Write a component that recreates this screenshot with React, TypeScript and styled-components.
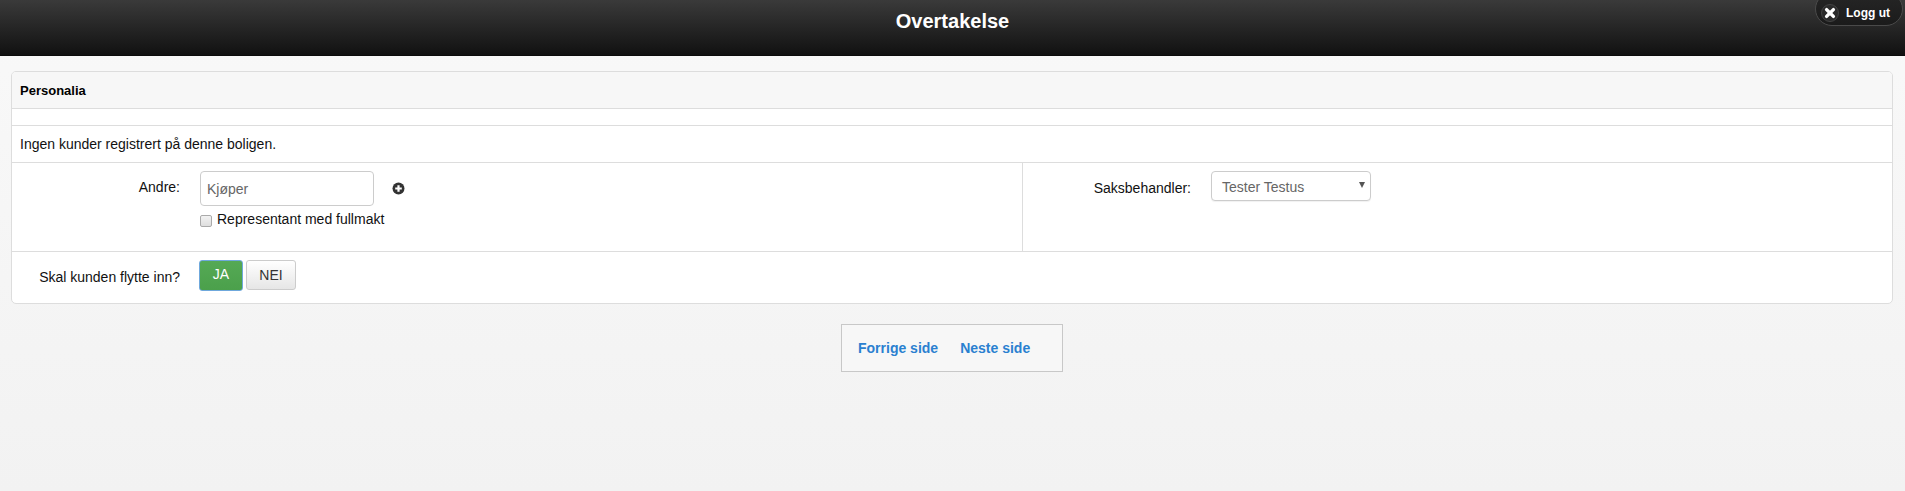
import React from "react";
import styled, { createGlobalStyle } from "styled-components";

const Global = createGlobalStyle`
  html, body { margin: 0; padding: 0; }
  body {
    min-height: 491px;
    background: linear-gradient(#f9f9f9, #f2f2f2);
    font-family: "Liberation Sans", Arial, sans-serif;
    font-size: 14px;
    color: #111;
    overflow: hidden;
  }
`;

const Page = styled.div`
  display: flex;
  flex-direction: column;
  height: 491px;
`;

const Header = styled.header`
  position: relative;
  height: 55px;
  border-bottom: 1px solid #0c0c0c;
  background: linear-gradient(#3a3a3a, #111111);
  color: #fff;
  text-align: center;
  font-size: 20px;
  font-weight: 700;
  line-height: 42px;
`;

const LogoutPill = styled.a`
  position: absolute;
  top: -8px;
  right: 2px;
  width: 88px;
  height: 34px;
  box-sizing: border-box;
  border: 1px solid #4a4a4a;
  border-radius: 17px;
  background: linear-gradient(#262626, #1b1b1b);
  display: flex;
  align-items: center;
  padding: 8px 0 0 5px;
  gap: 7px;
  font-size: 12px;
  font-weight: 700;
  line-height: 1;
  color: #fff;
`;

const LogoutIcon = styled.svg`
  width: 18px;
  height: 18px;
  flex: none;
`;

const Main = styled.main`
  padding: 15px 12px 0 11px;
`;

const Panel = styled.section`
  background: #fff;
  border: 1px solid #dddddd;
  border-radius: 5px;
  overflow: hidden;
`;

const PanelTitle = styled.h2`
  margin: 0;
  height: 36px;
  padding: 0 8px;
  background: #f7f7f7;
  border-bottom: 1px solid #dddddd;
  font-size: 13px;
  font-weight: 700;
  line-height: 37px;
  color: #000;
`;

const SpacerRow = styled.div`
  height: 16px;
  border-bottom: 1px solid #dddddd;
`;

const NoticeRow = styled.div`
  height: 36px;
  padding: 0 8px;
  border-bottom: 1px solid #dddddd;
  line-height: 36px;
  font-size: 14px;
  color: #111;
`;

const FieldsRow = styled.div`
  display: grid;
  grid-template-columns: 1010px 1fr;
  height: 88px;
  border-bottom: 1px solid #dddddd;
`;

const FieldCell = styled.div<{ $divider?: boolean }>`
  display: flex;
  padding-top: 8px;
  border-left: ${(p) => (p.$divider ? "1px solid #dddddd" : "none")};
`;

const Label = styled.label<{ $width: number }>`
  flex: none;
  width: ${(p) => p.$width}px;
  padding-right: 20px;
  box-sizing: border-box;
  text-align: right;
  font-size: 14px;
  color: #111;
`;

const AndreLabel = styled(Label)`
  line-height: 33px;
`;

const SelectLabel = styled(Label)`
  line-height: 35px;
  padding-right: 20px;
`;

const Stack = styled.div`
  display: flex;
  flex-direction: column;
`;

const InputRow = styled.div`
  display: flex;
  align-items: center;
  gap: 18px;
`;

const TextInput = styled.input`
  width: 174px;
  height: 35px;
  box-sizing: border-box;
  padding: 0 6px;
  border: 1px solid #cccccc;
  border-radius: 4px;
  font: 14px "Liberation Sans", Arial, sans-serif;
  color: #555;
  background: #fff;
  &::placeholder { color: #666; opacity: 1; }
`;

const PlusIcon = styled.svg`
  width: 13px;
  height: 13px;
  margin-top: -1px;
`;

const CheckRow = styled.div`
  display: flex;
  gap: 5px;
  margin-top: 5px;
  font-size: 14px;
  line-height: 16px;
  color: #111;
`;

const FakeCheck = styled.span`
  width: 12px;
  height: 12px;
  box-sizing: border-box;
  margin-top: 4px;
  border: 1px solid #aaa;
  border-radius: 2px;
  background: linear-gradient(#f2f2f2, #dedede);
`;

const SelectBox = styled.div`
  position: relative;
  width: 160px;
  height: 30px;
  box-sizing: border-box;
  padding-left: 10px;
  border: 1px solid #cccccc;
  border-radius: 4px;
  background: #fff;
  box-shadow: 0 1px 1px rgba(0, 0, 0, 0.06);
  font-size: 14px;
  line-height: 30px;
  color: #666;
`;

const Arrow = styled.span`
  position: absolute;
  top: 10px;
  right: 5px;
  width: 0;
  height: 0;
  border-left: 3px solid transparent;
  border-right: 3px solid transparent;
  border-top: 6px solid #555;
`;

const MoveRow = styled.div`
  display: flex;
  align-items: flex-start;
  height: 51px;
  padding-top: 8px;
  box-sizing: border-box;
`;

const MoveLabel = styled(Label)`
  line-height: 30px;
  padding-top: 2px;
`;

const Toggle = styled.div`
  display: flex;
  gap: 3px;
`;

const YesButton = styled.button`
  width: 44px;
  height: 31px;
  box-sizing: border-box;
  margin-left: -1px;
  border: 1px solid #6fa8dc;
  border-radius: 3px;
  background: linear-gradient(#55a955, #4ba04b);
  color: #fff;
  font: 14px "Liberation Sans", Arial, sans-serif;
  padding: 0 0 3px;
`;

const NoButton = styled.button`
  width: 50px;
  height: 30px;
  box-sizing: border-box;
  border: 1px solid #cccccc;
  border-radius: 3px;
  background: linear-gradient(#ffffff, #e6e6e6);
  color: #333;
  font: 14px "Liberation Sans", Arial, sans-serif;
  padding: 0 0 1px;
`;

const Pager = styled.nav`
  align-self: center;
  display: flex;
  gap: 22px;
  width: 222px;
  height: 48px;
  box-sizing: border-box;
  margin: 20px 0 0 -1px;
  padding: 0 16px;
  border: 1px solid #c8c8c8;
  background: #f7f7f7;
  font-size: 14px;
  font-weight: 700;
  line-height: 46px;
`;

const PagerLink = styled.a`
  color: #2a80d0;
`;

export default function App() {
  return (
    <Page>
      <Global />
      <Header>
        Overtakelse
        <LogoutPill>
          <LogoutIcon viewBox="0 0 18 18">
            <circle cx="9" cy="9" r="8.5" fill="#2a2a2a" stroke="#444" />
            <path d="M5.6 5.6 12.4 12.4M12.4 5.6 5.6 12.4" stroke="#fff" strokeWidth="3.4" strokeLinecap="round" />
          </LogoutIcon>
          Logg ut
        </LogoutPill>
      </Header>
      <Main>
        <Panel>
          <PanelTitle>Personalia</PanelTitle>
          <SpacerRow />
          <NoticeRow>Ingen kunder registrert på denne boligen.</NoticeRow>
          <FieldsRow>
            <FieldCell>
              <AndreLabel $width={188}>Andre:</AndreLabel>
              <Stack>
                <InputRow>
                  <TextInput placeholder="Kjøper" />
                  <PlusIcon viewBox="0 0 13 13">
                    <circle cx="6.5" cy="6.5" r="6" fill="#333" />
                    <path d="M6.5 3.2v6.6M3.2 6.5h6.6" stroke="#fff" strokeWidth="2.2" />
                  </PlusIcon>
                </InputRow>
                <CheckRow>
                  <FakeCheck />
                  Representant med fullmakt
                </CheckRow>
              </Stack>
            </FieldCell>
            <FieldCell $divider>
              <SelectLabel $width={188}>Saksbehandler:</SelectLabel>
              <SelectBox>
                Tester Testus
                <Arrow />
              </SelectBox>
            </FieldCell>
          </FieldsRow>
          <MoveRow>
            <MoveLabel $width={188}>Skal kunden flytte inn?</MoveLabel>
            <Toggle>
              <YesButton>JA</YesButton>
              <NoButton>NEI</NoButton>
            </Toggle>
          </MoveRow>
        </Panel>
      </Main>
      <Pager>
        <PagerLink>Forrige side</PagerLink>
        <PagerLink>Neste side</PagerLink>
      </Pager>
    </Page>
  );
}
